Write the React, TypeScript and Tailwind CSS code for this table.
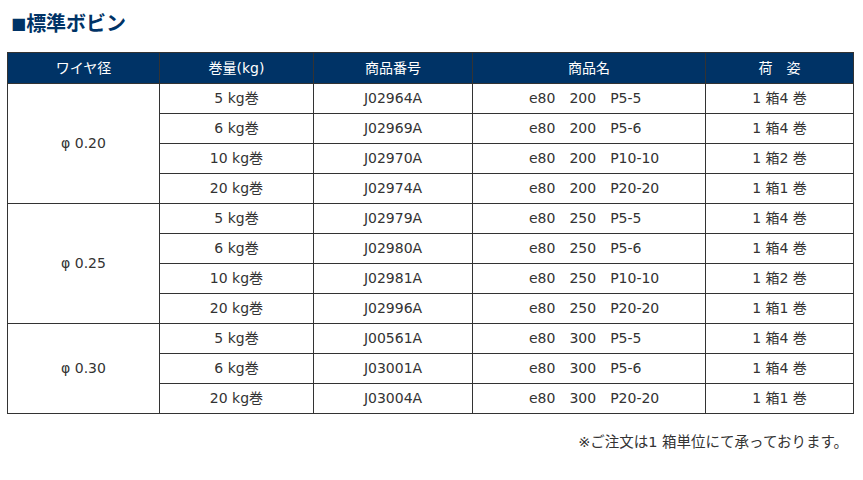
type Row = { size: string; code: string; name: string; pack: string };

type Group = { wire: string; rows: Row[] };

const groups: Group[] = [
  {
    wire: "φ 0.20",
    rows: [
      { size: "5 kg巻", code: "J02964A", name: "e80　200　P5-5", pack: "1 箱4 巻" },
      { size: "6 kg巻", code: "J02969A", name: "e80　200　P5-6", pack: "1 箱4 巻" },
      { size: "10 kg巻", code: "J02970A", name: "e80　200　P10-10", pack: "1 箱2 巻" },
      { size: "20 kg巻", code: "J02974A", name: "e80　200　P20-20", pack: "1 箱1 巻" },
    ],
  },
  {
    wire: "φ 0.25",
    rows: [
      { size: "5 kg巻", code: "J02979A", name: "e80　250　P5-5", pack: "1 箱4 巻" },
      { size: "6 kg巻", code: "J02980A", name: "e80　250　P5-6", pack: "1 箱4 巻" },
      { size: "10 kg巻", code: "J02981A", name: "e80　250　P10-10", pack: "1 箱2 巻" },
      { size: "20 kg巻", code: "J02996A", name: "e80　250　P20-20", pack: "1 箱1 巻" },
    ],
  },
  {
    wire: "φ 0.30",
    rows: [
      { size: "5 kg巻", code: "J00561A", name: "e80　300　P5-5", pack: "1 箱4 巻" },
      { size: "6 kg巻", code: "J03001A", name: "e80　300　P5-6", pack: "1 箱4 巻" },
      { size: "20 kg巻", code: "J03004A", name: "e80　300　P20-20", pack: "1 箱1 巻" },
    ],
  },
];

const headers = ["ワイヤ径", "巻量(kg)", "商品番号", "商品名", "荷　姿"];

const cell = "border border-[#333] p-0 text-center";

export default function App() {
  return (
    <div
      className="w-[863px] h-[480px] bg-white text-[#333] pt-[9px] px-[7px]"
      style={{ fontFamily: '"DejaVu Sans", "Noto Sans CJK JP", sans-serif' }}
    >
      <h2 className="pl-[4px] text-[20px] leading-[30px] font-bold text-[#003366]">
        <span className="text-[16px] align-[2px]">■</span>標準ボビン
      </h2>

      <table className="mt-[13px] w-[846px] border-collapse table-fixed text-[14px]">
        <colgroup>
          <col className="w-[152px]" />
          <col className="w-[154px]" />
          <col className="w-[159px]" />
          <col className="w-[233px]" />
          <col className="w-[148px]" />
        </colgroup>
        <thead>
          <tr className="h-[31px] bg-[#003366] text-white">
            {headers.map((h) => (
              <th key={h} className={`${cell} font-normal`}>
                {h}
              </th>
            ))}
          </tr>
        </thead>
        <tbody>
          {groups.map((g) =>
            g.rows.map((r, i) => (
              <tr key={r.code} className="h-[30px]">
                {i === 0 && (
                  <td rowSpan={g.rows.length} className={cell}>
                    {g.wire}
                  </td>
                )}
                <td className={cell}>{r.size}</td>
                <td className={cell}>{r.code}</td>
                <td className="border border-[#333] p-0 pl-[56px] text-left whitespace-pre">
                  {r.name}
                </td>
                <td className={cell}>{r.pack}</td>
              </tr>
            ))
          )}
        </tbody>
      </table>

      <p className="mt-[17px] pr-[8px] text-right text-[14.5px] leading-[22px]">
        ※ご注文は1 箱単位にて承っております。
      </p>
    </div>
  );
}
